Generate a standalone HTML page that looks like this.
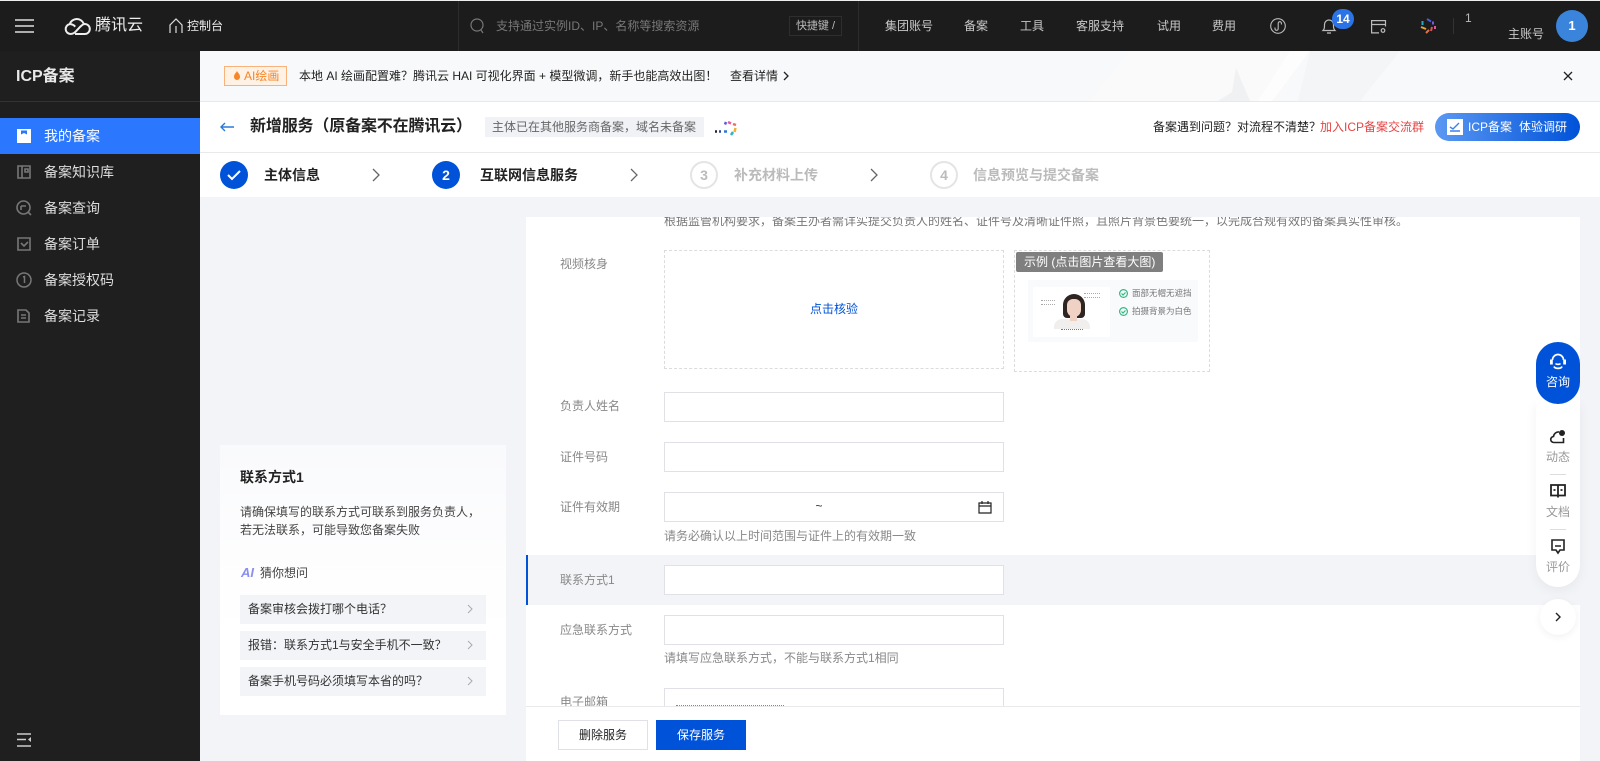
<!DOCTYPE html>
<html lang="zh"><head><meta charset="utf-8"><title>ICP备案</title>
<style>
*{box-sizing:border-box;margin:0;padding:0}
html,body{width:1600px;height:761px;overflow:hidden;background:#f3f4f7}
body{position:relative;font:12px/20px "Liberation Sans","Noto Sans CJK SC",sans-serif;color:#222}
.a,.t{position:absolute}
.t{white-space:nowrap;height:20px;line-height:20px}
svg{position:absolute;display:block;overflow:visible}
.top{color:#c8c8c8}
.m{position:absolute;left:0;width:200px;height:36px;color:#ddd}
.m span{position:absolute;left:44px;top:8px;font-size:14px}
.lb{color:#888;left:560px}
.in{position:absolute;left:664px;width:340px;height:30px;background:#fff;border:1px solid #dfe1e6}
.hint{color:#888;left:664px}
.q{position:absolute;left:240px;width:246px;height:29px;background:#f3f4f7;line-height:29px;padding-left:8px;color:#333}
.st{font-size:14px;font-weight:700}
.c{position:absolute;border-radius:50%;width:28px;height:28px;text-align:center;font:700 14px/28px "Liberation Sans",sans-serif}
.fl{color:#999;left:1536px;width:44px;text-align:center}
</style></head><body>

<!-- top bar -->
<div class="a" style="left:0;top:1px;width:1600px;height:50px;background:#1c1c1c"></div>
<div class="a" style="left:0;top:0;width:1600px;height:1px;background:#eee"></div>
<svg style="left:15px;top:19px" width="19" height="14"><path d="M0 1h19M0 7h19M0 13h19" stroke="#ddd" stroke-width="1.600"/></svg>
<svg style="left:64px;top:18px" width="26" height="17" viewBox="0 0 26 17" fill="none" stroke="#eee" stroke-width="2"><path d="M6.500 16a5 5 0 0 1-.8-9.900A7.500 7.500 0 0 1 19.800 5.800"/><path d="M6.500 16c3 0 4.500-1.500 6.500-3.800l3.500-3.700c1.500-1.500 2.800-2.500 4.300-2.500a5 5 0 0 1 0 10H11"/><path d="M6.500 6.300c2 0 3.500 1 4.700 2.400"/></svg>
<div class="t" style="left:95px;top:16px;font-size:16px;color:#eee">腾讯云</div>
<svg style="left:168px;top:18px" width="16" height="16" fill="none" stroke="#ddd" stroke-width="1.200"><path d="M2 15V7l6-6 6 6v8M8 15V8"/></svg>
<div class="t" style="left:187px;top:16px;color:#eee">控制台</div>
<div class="a" style="left:458px;top:1px;width:1px;height:50px;background:#2c2c2c"></div>
<svg style="left:470px;top:18px" width="15" height="16" fill="none" stroke="#777" stroke-width="1.200"><circle cx="7" cy="7" r="6"/><path d="M11 12l2 3"/></svg>
<div class="t" style="left:496px;top:16px;color:#777">支持通过实例ID、IP、名称等搜索资源</div>
<div class="t" style="left:789px;top:16px;width:53px;text-align:center;border:1px solid #2e2e2e;color:#bbb;font-size:11px;line-height:18px">快捷键 /</div>
<div class="a" style="left:858px;top:1px;width:1px;height:50px;background:#2c2c2c"></div>
<div class="t top" style="left:885px;top:16px">集团账号</div>
<div class="t top" style="left:964px;top:16px">备案</div>
<div class="t top" style="left:1020px;top:16px">工具</div>
<div class="t top" style="left:1076px;top:16px">客服支持</div>
<div class="t top" style="left:1157px;top:16px">试用</div>
<div class="t top" style="left:1212px;top:16px">费用</div>
<svg style="left:1270px;top:18px" width="16" height="16" fill="none" stroke="#bbb" stroke-width="1.100"><circle cx="8" cy="8" r="7.300"/><path d="M5 9.500v1.200a1.600 1.600 0 0 0 3.200 0V5.300a1.600 1.600 0 0 1 3.200 0v1.200"/></svg>
<svg style="left:1322px;top:18px" width="14" height="16" fill="none" stroke="#bbb" stroke-width="1.200"><path d="M1 12.500h12c-1.500-1.500-1.500-3-1.500-6a4.500 4.500 0 0 0-9 0c0 3 0 4.500-1.500 6zM5 15h4"/></svg>
<div class="a" style="left:1332px;top:9px;width:22px;height:20px;border-radius:11px;background:#2b73e6;color:#fff;font:700 12px/20px 'Liberation Sans',sans-serif;text-align:center">14</div>
<svg style="left:1371px;top:20px" width="16" height="14" fill="none" stroke="#bbb" stroke-width="1.200"><path d="M14.500 6.500V.6H.6v12.300H8M.6 4.500h13.900"/><circle cx="12" cy="10.500" r="1.800"/></svg>
<svg style="left:1420px;top:18px" width="16" height="16" fill="none" stroke-width="2"><path d="M2.500 3v4" stroke="#2aa5c8"/><path d="M7 1l4 2.500" stroke="#4a5ad8"/><path d="M13 3.500v3" stroke="#7a5ad8"/><path d="M15 8v3" stroke="#d85a9a"/><path d="M12 9l-1 4" stroke="#e05050"/><path d="M9 12l-3 3" stroke="#e87040"/><path d="M1 9l5 2" stroke="#f0a030"/></svg>
<div class="a" style="left:1453px;top:18px;width:1px;height:16px;background:#333"></div>
<div class="t" style="left:1465px;top:8px;color:#bbb">1</div>
<div class="t top" style="left:1508px;top:24px">主账号</div>
<div class="a" style="left:1556px;top:10px;width:32px;height:32px;border-radius:50%;background:#3a84dc;color:#fff;text-align:center;font:700 13px/32px 'Liberation Sans',sans-serif">1</div>

<!-- sidebar -->
<div class="a" style="left:0;top:51px;width:200px;height:710px;background:#1f1f1f"></div>
<div class="t" style="left:16px;top:67px;font-size:16px;font-weight:700;color:#e8e8e8">ICP备案</div>
<div class="a" style="left:0;top:101px;width:200px;height:1px;background:#333"></div>
<div class="m" style="top:118px;background:#2b78ff;color:#fff"><span>我的备案</span></div>
<div class="m" style="top:154px"><span>备案知识库</span></div>
<div class="m" style="top:190px"><span>备案查询</span></div>
<div class="m" style="top:226px"><span>备案订单</span></div>
<div class="m" style="top:262px"><span>备案授权码</span></div>
<div class="m" style="top:298px"><span>备案记录</span></div>
<svg style="left:17px;top:129px" width="14" height="14"><path d="M0 0h14v14H0z" fill="#fff"/><path d="M4 1.500v4l3-1.500 3 1.500v-4z" fill="#2b78ff"/></svg>
<svg style="left:17px;top:165px" width="14" height="14" fill="none" stroke="#777" stroke-width="1.600"><path d="M1 1h12v12H1zM5 1v12M8 4h3v3H8z"/></svg>
<svg style="left:16px;top:200px" width="16" height="16" fill="none" stroke="#777" stroke-width="1.600"><circle cx="7.500" cy="7.500" r="6.500"/><path d="M12 12l3 3M5 6h5M5 6v4"/></svg>
<svg style="left:17px;top:237px" width="14" height="14" fill="none" stroke="#777" stroke-width="1.600"><path d="M1 1h12v12H1zM4 6l3 3 4-4"/></svg>
<svg style="left:16px;top:272px" width="16" height="16" fill="none" stroke="#777" stroke-width="1.500"><circle cx="8" cy="8" r="7"/><path d="M7 5l1.500-.5V11"/></svg>
<svg style="left:17px;top:309px" width="13" height="14" fill="none" stroke="#777" stroke-width="1.600"><path d="M1 1h8l3 3v9H1zM4 6h5M4 9h5"/></svg>
<svg style="left:17px;top:733px" width="14" height="14" fill="none" stroke="#ccc" stroke-width="1.500"><path d="M0 1h14M0 13h14M0 6.500h9"/><path d="M14 4v5l-3-2.500z" fill="#ccc" stroke="none"/></svg>

<!-- banner -->
<svg style="left:200px;top:51px" width="1400" height="50" viewBox="200 51 1400 50">
  <rect x="200" y="51" width="1400" height="50" fill="#f8f9fa"/>
  <polygon points="1130,51 1290,51 1262,101 1090,101" fill="#fafafb"/>
  <polygon points="1310,51 1400,51 1360,101 1298,101" fill="#f4f5f6"/>
  <polygon points="1290,51 1310,51 1272,101 1258,101" fill="#fdfdfd"/>
  <polygon points="1236,68 1250,101 1218,101 1232,92" fill="#f0f1f2"/>
</svg>
<div class="a" style="left:200px;top:101px;width:1400px;height:1px;background:#e8e9eb"></div>
<div class="a" style="left:224px;top:66px;width:63px;height:20px;background:#fff1e4;border:1px solid #f9b27a;color:#f5862a;line-height:18px;padding-left:19px;font-size:12px;white-space:nowrap">AI绘画</div>
<svg style="left:234px;top:71px" width="6" height="9"><path d="M3 0c1 2 3 3 3 6a3 3 0 0 1-6 0c0-3 2-4 3-6z" fill="#f5862a"/></svg>
<div class="t" style="left:299px;top:66px;color:#222">本地 AI 绘画配置难？腾讯云 HAI 可视化界面 + 模型微调，新手也能高效出图！</div>
<div class="t" style="left:730px;top:66px;color:#222">查看详情</div>
<svg style="left:783px;top:71px" width="7" height="10" fill="none" stroke="#222" stroke-width="1.300"><path d="M1 1l4 4-4 4"/></svg>
<svg style="left:1563px;top:71px" width="10" height="10" stroke="#222" stroke-width="1.300"><path d="M1 1l8 8M9 1l-8 8"/></svg>

<!-- header -->
<div class="a" style="left:200px;top:102px;width:1400px;height:50px;background:#fff"></div>
<div class="a" style="left:200px;top:152px;width:1400px;height:1px;background:#e8e9eb"></div>
<svg style="left:220px;top:122px" width="14" height="10" fill="none" stroke="#2b78d6" stroke-width="1.400"><path d="M14 5H1M5 1L1 5l4 4"/></svg>
<div class="t" style="left:250px;top:116px;font-size:16px;line-height:22px;height:22px;font-weight:700;color:#222;letter-spacing:-.15px">新增服务（原备案不在腾讯云）</div>
<div class="a" style="left:485px;top:117px;width:219px;height:20px;background:#f0f2f5;color:#666;padding-left:7px;white-space:nowrap">主体已在其他服务商备案，域名未备案</div>
<svg style="left:715px;top:120px" width="23" height="16" fill="none" stroke-width="2.500"><path d="M0 11.500h2" stroke="#223"/><path d="M4 11.500h2" stroke="#2a4aa0"/><path d="M9 11.500h3" stroke="#2b78d6"/><path d="M10 4.500l1-2.500" stroke="#5a5ae0"/><path d="M13 2l3 1.500" stroke="#e060a0"/><path d="M18 4l3 1" stroke="#e87060"/><path d="M20.500 8l-1 4" stroke="#f0b030"/><path d="M18 12l-2 3" stroke="#2bb5c0"/></svg>
<div class="t" style="left:1153px;top:117px;color:#222">备案遇到问题？对流程不清楚？</div>
<div class="t" style="left:1320px;top:117px;color:#e54545">加入ICP备案交流群</div>
<div class="a" style="left:1435px;top:113px;width:145px;height:28px;border-radius:14px;background:linear-gradient(90deg,#5b98f2,#0052d9)"></div>
<svg style="left:1447px;top:119px" width="16" height="16"><path d="M0 0h16v16H0z" fill="#fff"/><path d="M3 8l3 2 6-6M3 12h10" stroke="#3d7fe8" stroke-width="1.400" fill="none"/></svg>
<div class="t" style="left:1468px;top:117px;color:#fff">ICP备案</div>
<div class="t" style="left:1519px;top:117px;color:#fff">体验调研</div>

<!-- steps -->
<div class="a" style="left:200px;top:153px;width:1400px;height:44px;background:#fff"></div>
<div class="c" style="left:220px;top:161px;background:#0052d9"></div>
<svg style="left:227px;top:170px" width="14" height="11" fill="none" stroke="#fff" stroke-width="2"><path d="M1 5l4 4 8-8"/></svg>
<div class="t st" style="left:264px;top:165px">主体信息</div>
<svg style="left:372px;top:168px" width="9" height="14" fill="none" stroke="#666" stroke-width="1.300"><path d="M1 1l6 6-6 6"/></svg>
<div class="c" style="left:432px;top:161px;background:#0052d9;color:#fff">2</div>
<div class="t st" style="left:480px;top:165px">互联网信息服务</div>
<svg style="left:630px;top:168px" width="9" height="14" fill="none" stroke="#666" stroke-width="1.300"><path d="M1 1l6 6-6 6"/></svg>
<div class="c" style="left:690px;top:161px;border:2px solid #e3e4e6;color:#bbb;line-height:24px">3</div>
<div class="t st" style="left:734px;top:165px;color:#bbb">补充材料上传</div>
<svg style="left:870px;top:168px" width="9" height="14" fill="none" stroke="#666" stroke-width="1.300"><path d="M1 1l6 6-6 6"/></svg>
<div class="c" style="left:930px;top:161px;border:2px solid #e3e4e6;color:#bbb;line-height:24px">4</div>
<div class="t st" style="left:973px;top:165px;color:#bbb">信息预览与提交备案</div>

<!-- left panel -->
<div class="a" style="left:220px;top:445px;width:286px;height:270px;background:linear-gradient(180deg,#f9fafc 0,#fdfdfe 40%,#fff 70%)"></div>
<div class="t" style="left:240px;top:467px;font-size:14px;font-weight:700;color:#222">联系方式1</div>
<div class="t" style="left:240px;top:503px;color:#444;line-height:18px;height:36px">请确保填写的联系方式可联系到服务负责人，<br>若无法联系，可能导致您备案失败</div>
<div class="t" style="left:241px;top:563px;font:italic 700 13px/20px 'Liberation Sans',sans-serif;color:#8a8ff0">AI</div>
<div class="t" style="left:260px;top:563px;color:#444">猜你想问</div>
<div class="q" style="top:595px">备案审核会拨打哪个电话？</div>
<div class="q" style="top:631px">报错：联系方式1与安全手机不一致？</div>
<div class="q" style="top:667px">备案手机号码必须填写本省的吗？</div>
<svg style="left:467px;top:604px" width="6" height="10" fill="none" stroke="#aaa"><path d="M1 1l4 4-4 4"/></svg>
<svg style="left:467px;top:640px" width="6" height="10" fill="none" stroke="#aaa"><path d="M1 1l4 4-4 4"/></svg>
<svg style="left:467px;top:676px" width="6" height="10" fill="none" stroke="#aaa"><path d="M1 1l4 4-4 4"/></svg>

<!-- form card -->
<div class="a" style="left:526px;top:217px;width:1054px;height:544px;background:#fff;overflow:hidden">
  <div class="t" style="left:138px;top:-6px;color:#777">根据监管机构要求，备案主办者需详实提交负责人的姓名、证件号及清晰证件照，且照片背景色要统一，以完成合规有效的备案真实性审核。</div>
</div>
<div class="t lb" style="top:254px">视频核身</div>
<div class="a" style="left:664px;top:250px;width:340px;height:119px;border:1px dashed #dcdcdc;text-align:center;line-height:117px;color:#0052d9">点击核验</div>
<div class="a" style="left:1014px;top:250px;width:196px;height:122px;border:1px dashed #dcdcdc"></div>
<div class="a" style="left:1016px;top:252px;width:147px;height:20px;background:#7f7f7f;border-radius:2px;color:#fff;padding-left:8px;white-space:nowrap;font-size:12px;line-height:20px">示例 (点击图片查看大图)</div>
<div class="a" style="left:1028px;top:280px;width:170px;height:62px;background:#f9fafc"></div>
<div class="a" style="left:1033px;top:287px;width:77px;height:50px;background:#fff"></div>
<div class="a" style="left:1054px;top:319px;width:36px;height:10px;background:#f1efed;border-radius:8px 8px 0 0"></div>
<div class="a" style="left:1063px;top:294px;width:22px;height:24px;background:#2e2522;border-radius:11px 11px 4px 4px"></div>
<div class="a" style="left:1067px;top:299px;width:14px;height:18px;background:#f0d2c4;border-radius:6px 6px 7px 7px"></div>
<div class="a" style="left:1070px;top:316px;width:7px;height:5px;background:#f0d2c4"></div>
<div class="a" style="left:1041px;top:300px;width:14px;height:5px;border-top:1px dotted #aaa;border-bottom:1px dotted #aaa"></div>
<div class="a" style="left:1084px;top:293px;width:16px;height:5px;border-top:1px dotted #aaa;border-bottom:1px dotted #aaa"></div>
<div class="a" style="left:1061px;top:329px;width:22px;border-top:1px dotted #777"></div>
<svg style="left:1119px;top:289px" width="9" height="9" fill="none" stroke="#2bba80" stroke-width="1.200"><circle cx="4.500" cy="4.500" r="3.900"/><path d="M2.500 4.500l1.500 1.500 2.500-2.500"/></svg>
<svg style="left:1119px;top:307px" width="9" height="9" fill="none" stroke="#2bba80" stroke-width="1.200"><circle cx="4.500" cy="4.500" r="3.900"/><path d="M2.500 4.500l1.500 1.500 2.500-2.500"/></svg>
<div class="t" style="left:1132px;top:283px;font-size:8.500px;color:#777">面部无帽无遮挡</div>
<div class="t" style="left:1132px;top:301px;font-size:8.500px;color:#777">拍摄背景为白色</div>

<div class="t lb" style="top:396px">负责人姓名</div><div class="in" style="top:392px"></div>
<div class="t lb" style="top:447px">证件号码</div><div class="in" style="top:442px"></div>
<div class="t lb" style="top:497px">证件有效期</div>
<div class="in" style="top:492px;text-align:center;line-height:26px;color:#333;padding-right:30px">~</div>
<svg style="left:978px;top:500px" width="14" height="14" fill="none" stroke="#222" stroke-width="1.200"><path d="M1 3h12v10H1zM1 6h12M4 1v3M10 1v3"/></svg>
<div class="t hint" style="top:526px">请务必确认以上时间范围与证件上的有效期一致</div>
<div class="a" style="left:526px;top:555px;width:1054px;height:50px;background:#f2f4f7"></div>
<div class="a" style="left:526px;top:555px;width:2px;height:50px;background:#0052d9"></div>
<div class="t lb" style="top:570px">联系方式1</div><div class="in" style="top:565px"></div>
<div class="t lb" style="top:620px">应急联系方式</div><div class="in" style="top:615px"></div>
<div class="t hint" style="top:648px">请填写应急联系方式，不能与联系方式1相同</div>
<div class="t lb" style="top:692px">电子邮箱</div><div class="in" style="top:688px;height:40px"></div>
<div class="a" style="left:676px;top:705px;width:108px;border-top:1px dotted #888"></div>

<!-- footer -->
<div class="a" style="left:526px;top:706px;width:1054px;height:55px;background:#fff;border-top:1px solid #e8e9eb"></div>
<div class="a" style="left:558px;top:720px;width:90px;height:30px;background:#fff;border:1px solid #dfe1e6;text-align:center;line-height:28px;color:#222">删除服务</div>
<div class="a" style="left:656px;top:720px;width:90px;height:30px;background:#0052d9;text-align:center;line-height:30px;color:#fff">保存服务</div>

<!-- floating -->
<div class="a" style="left:1536px;top:400px;width:44px;height:187px;background:#fff;border-radius:0 0 22px 22px;box-shadow:0 4px 12px rgba(0,0,0,.05)"></div>
<div class="a" style="left:1536px;top:342px;width:44px;height:62px;background:#0052d9;border-radius:22px"></div>
<svg style="left:1549px;top:353px" width="18" height="18" fill="none" stroke="#fff" stroke-width="1.700"><path d="M3.500 7a5.500 5.500 0 0 1 11 0M5 13.500c1 2.500 7 2.500 8 0M6.500 10.500c1 1.200 4 1.200 5 0"/><path d="M1 6.500h2.800v5H1zM14.200 6.500H17v5h-2.800z" fill="#fff" stroke="none"/></svg>
<div class="t" style="left:1536px;top:372px;width:44px;text-align:center;color:#fff">咨询</div>
<svg style="left:1550px;top:429px" width="16" height="15" fill="none" stroke="#222" stroke-width="1.600"><path d="M4 13.500a3 3 0 0 1-.5-6A5 5 0 0 1 9 3M4 13.500h9.500V9"/><circle cx="12" cy="4" r="3" fill="#222" stroke="none"/></svg>
<div class="t fl" style="top:447px">动态</div>
<div class="a" style="left:1550px;top:474px;width:16px;height:1px;background:#ddd"></div>
<svg style="left:1550px;top:484px" width="16" height="14" fill="none" stroke="#222" stroke-width="1.800"><path d="M1 1h14v10.500H1zM8 1v12.500M3.500 6h2M10.500 6h2"/></svg>
<div class="t fl" style="top:502px">文档</div>
<div class="a" style="left:1550px;top:529px;width:16px;height:1px;background:#ddd"></div>
<svg style="left:1551px;top:539px" width="14" height="15" fill="none" stroke="#222" stroke-width="1.600"><path d="M1 1h12v10H9l-2 3-2-3H1zM4 7h6"/></svg>
<div class="t fl" style="top:557px">评价</div>
<div class="a" style="left:1540px;top:599px;width:36px;height:36px;border-radius:50%;background:#fff;box-shadow:0 2px 8px rgba(0,0,0,.06)"></div>
<svg style="left:1555px;top:612px" width="6" height="10" fill="none" stroke="#222" stroke-width="1.400"><path d="M1 1l4 4-4 4"/></svg>
</body></html>
